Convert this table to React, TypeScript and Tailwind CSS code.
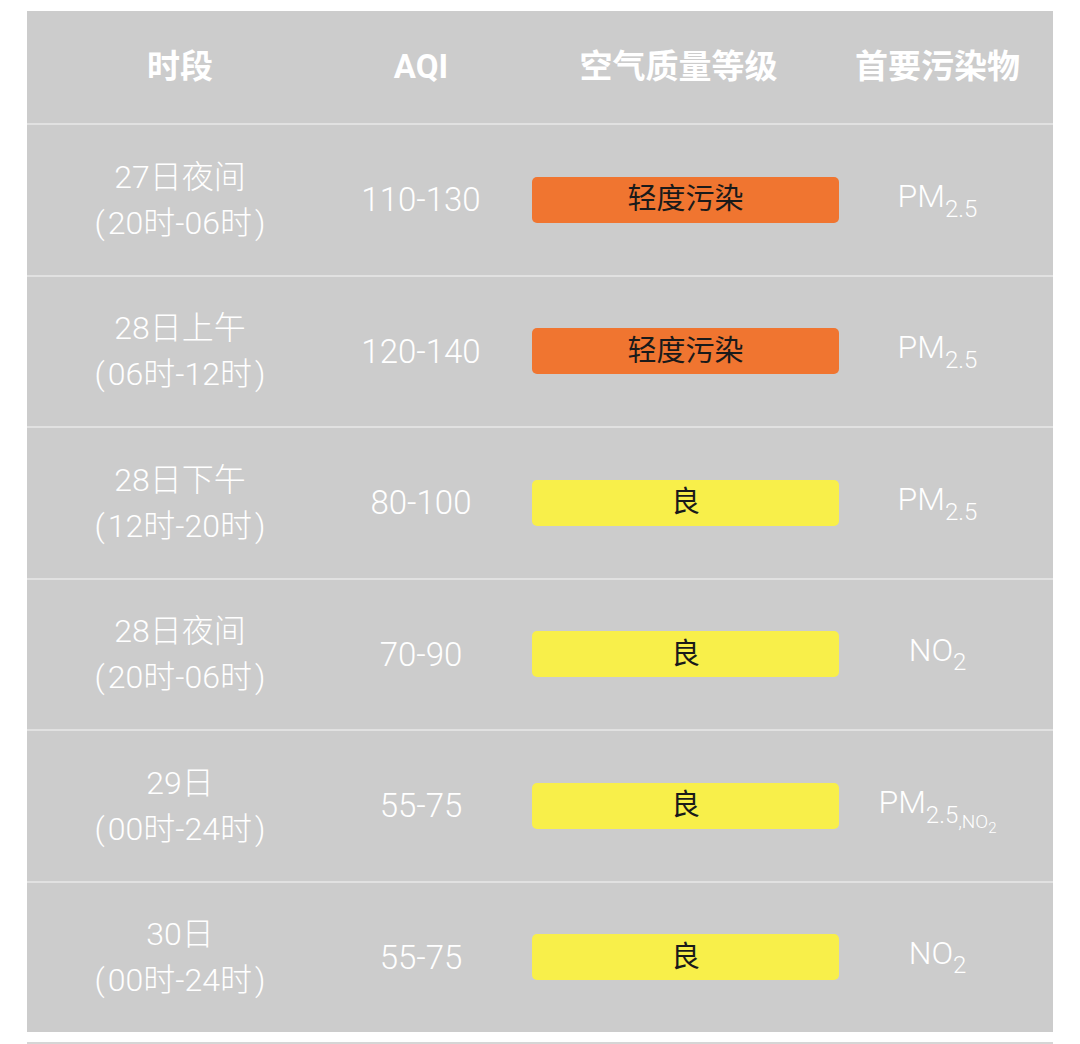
import React from 'react';

type Level = 'light' | 'good';

interface Row {
    day: string;
    range: string;
    aqi: string;
    level: Level;
    pollutant: 'pm' | 'no2' | 'both';
}

const rows: Row[] = [
    { day: '27日夜间', range: '20时-06时', aqi: '110-130', level: 'light', pollutant: 'pm' },
    { day: '28日上午', range: '06时-12时', aqi: '120-140', level: 'light', pollutant: 'pm' },
    { day: '28日下午', range: '12时-20时', aqi: '80-100', level: 'good', pollutant: 'pm' },
    { day: '28日夜间', range: '20时-06时', aqi: '70-90', level: 'good', pollutant: 'no2' },
    { day: '29日', range: '00时-24时', aqi: '55-75', level: 'good', pollutant: 'both' },
    { day: '30日', range: '00时-24时', aqi: '55-75', level: 'good', pollutant: 'no2' },
];

const font = { fontFamily: 'Roboto, "Noto Sans CJK SC", sans-serif' };

const Pollutant: React.FC<{ kind: Row['pollutant'] }> = ({ kind }) => {
    if (kind === 'no2') {
        return (
            <span className="text-[32px] leading-none whitespace-nowrap">
                NO<span className="relative top-[9px] text-[24px]">2</span>
            </span>
        );
    }
    return (
        <span className="text-[32px] leading-none whitespace-nowrap">
            PM<span className="relative top-[10px] text-[24px]">2.5</span>
            {kind === 'both' && (
                <span className="relative top-[15px] text-[19px]">
                    ,NO<span className="relative top-[5px] text-[15px]">2</span>
                </span>
            )}
        </span>
    );
};

const App: React.FC = () => {
    return (
        <div className="w-[1080px] h-[1044px] bg-white pt-[11px] px-[27px]" style={font}>
            <div className="bg-[#cccccc] text-white">
                {/* header */}
                <div className="grid grid-cols-[306px_176px_353px_191px] h-[112px] items-center text-[33px] font-bold whitespace-nowrap">
                    <div className="flex justify-center">时段</div>
                    <div className="flex justify-center">AQI</div>
                    <div className="flex justify-center pr-[14px]">空气质量等级</div>
                    <div className="flex justify-center pr-[40px]">首要污染物</div>
                </div>

                {rows.map((row, i) => (
                    <div
                        key={i}
                        className="grid grid-cols-[306px_176px_353px_191px] h-[151.5px] items-center border-t-2 border-[#e1e1e1] font-light"
                    >
                        <div className="flex flex-col items-center text-[32px] leading-[46px] whitespace-nowrap">
                            <span>{row.day}</span>
                            <span>
                                <span className="mr-[3px]">(</span>
                                {row.range}
                                <span className="ml-[3px]">)</span>
                            </span>
                        </div>
                        <div className="text-center text-[33px]">{row.aqi}</div>
                        <div className="flex justify-center">
                            <div
                                className={
                                    row.level === 'light'
                                        ? 'w-[307px] h-[46px] rounded-[5px] bg-[#f07530] flex items-center justify-center text-[29px] text-[#1a1a1a] font-normal'
                                        : 'w-[307px] h-[46px] rounded-[5px] bg-[#f8ef4a] flex items-center justify-center text-[29px] text-[#1a1a1a] font-normal'
                                }
                            >
                                {row.level === 'light' ? '轻度污染' : '良'}
                            </div>
                        </div>
                        <div className="flex justify-center pr-[40px] -mt-[8px]">
                            <Pollutant kind={row.pollutant} />
                        </div>
                    </div>
                ))}
            </div>
            <div className="mt-[10px] h-[2px] bg-[#d6d6d6]" />
        </div>
    );
};

export default App;
